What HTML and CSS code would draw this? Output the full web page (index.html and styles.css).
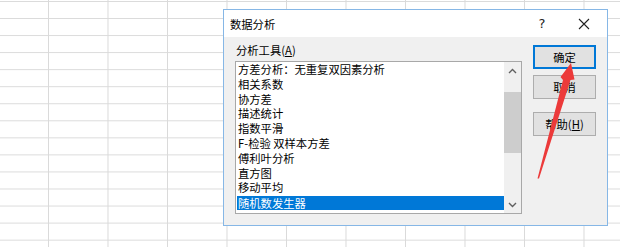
FILE: index.html
```html
<!DOCTYPE html>
<html lang="zh-CN">
<head>
<meta charset="utf-8">
<link rel="stylesheet" href="styles.css">
</head>
<body>
<div class="sheet"></div>
<div class="dialog">
  <div class="titlebar">
    <span class="title">数据分析</span>
    <span class="help-q">?</span>
    <span class="close">
      <svg width="12" height="12" viewBox="0 0 12 12"><path d="M1 1L11 11M11 1L1 11" stroke="#222" stroke-width="1.1" fill="none"/></svg>
    </span>
  </div>
  <div class="body">
    <div class="left">
      <div class="label">分析工具(<u>A</u>)</div>
      <div class="listbox">
        <ul class="items">
          <li>方差分析：无重复双因素分析</li>
          <li>相关系数</li>
          <li>协方差</li>
          <li>描述统计</li>
          <li>指数平滑</li>
          <li>F-检验 双样本方差</li>
          <li>傅利叶分析</li>
          <li>直方图</li>
          <li>移动平均</li>
          <li class="sel">随机数发生器</li>
        </ul>
        <div class="scrollbar">
          <div class="arrow up"><svg width="9" height="6" viewBox="0 0 9 6"><path d="M1 5L4.5 1.5L8 5" stroke="#606060" stroke-width="1.4" fill="none"/></svg></div>
          <div class="track"><div class="thumb"></div></div>
          <div class="arrow down"><svg width="9" height="6" viewBox="0 0 9 6"><path d="M1 1L4.5 4.5L8 1" stroke="#606060" stroke-width="1.4" fill="none"/></svg></div>
        </div>
      </div>
    </div>
    <div class="buttons">
      <div class="btn default">确定</div>
      <div class="btn">取消</div>
      <div class="btn help">帮助(<u>H</u>)</div>
    </div>
  </div>
</div>
<svg class="pointer" width="620" height="247" viewBox="0 0 620 247">
  <polygon points="571,63 574.5,79.5 570.5,80 539,178.5 537.5,178.5 563,80 560.5,77" fill="#ec3a3a"/>
</svg>
</body>
</html>
```
FILE: styles.css
```css
html, body {
  margin: 0;
  padding: 0;
}
body {
  width: 620px;
  height: 247px;
  overflow: hidden;
  position: relative;
  background: #fff;
  font-family: "Noto Sans CJK SC", "Noto Sans", sans-serif;
  color: #000;
}
.sheet {
  width: 620px;
  height: 247px;
  background-color: #fff;
  background-image:
    linear-gradient(to right, #dadada 0, #dadada 1px, transparent 1px),
    linear-gradient(to bottom, #dadada 0, #dadada 1px, transparent 1px);
  background-size: 59.5px 100%, 100% 17.05px;
  background-position: 48px 0, 0 1px;
}
.dialog {
  position: absolute;
  left: 223px;
  top: 9px;
  width: 383px;
  height: 215px;
  border: 1px solid #86b7e6;
  background: #f0f0f0;
  display: flex;
  flex-direction: column;
}
.titlebar {
  height: 27px;
  background: #fff;
  display: flex;
  align-items: center;
  font-size: 11.3px;
}
.title {
  margin-left: 6px;
  flex: 1;
  color: #000;
}
.help-q {
  font-family: "Segoe UI", "DejaVu Sans", sans-serif;
  font-size: 13px;
  color: #222;
  width: 14px;
  text-align: center;
  margin-right: 29px;
}
.close {
  width: 12px;
  height: 12px;
  margin-right: 17px;
  display: flex;
}
.body {
  flex: 1;
  display: flex;
  padding: 5px 0 0 11px;
}
.left {
  display: flex;
  flex-direction: column;
}
.label {
  font-size: 11.3px;
  line-height: 16px;
  height: 16px;
  margin-bottom: 3px;
  padding-left: 1px;
}
.listbox {
  width: 285px;
  height: 151px;
  border: 1px solid #a8a8a8;
  background: #fff;
  display: flex;
}
.items {
  list-style: none;
  margin: 0;
  padding: 0;
  flex: 1;
  font-size: 11.3px;
}
.items li {
  height: 14.8px;
  line-height: 14.8px;
  padding-left: 2px;
  white-space: nowrap;
}
.items li.sel {
  background: #0078d7;
  color: #fff;
  margin-left: 1px;
  padding-left: 1px;
  height: 14px;
  margin-top: 0.5px;
  line-height: 14px;
}
.scrollbar {
  width: 17px;
  background: #f0f0f0;
  display: flex;
  flex-direction: column;
}
.arrow {
  height: 17px;
  display: flex;
  align-items: center;
  justify-content: center;
}
.track {
  flex: 1;
  padding-top: 13px;
}
.thumb {
  height: 61px;
  background: #cdcdcd;
}
.buttons {
  margin-left: 11px;
  margin-top: 3px;
  display: flex;
  flex-direction: column;
}
.btn {
  width: 61px;
  height: 22px;
  border: 1px solid #adadad;
  background: #e1e1e1;
  font-size: 11.3px;
  display: flex;
  align-items: center;
  justify-content: center;
  margin-bottom: 6px;
}
.btn.default {
  width: 59px;
  height: 20px;
  border: 2px solid #0078d7;
}
.btn.help {
  margin-top: 7px;
}
.pointer {
  position: absolute;
  left: 0;
  top: 0;
}
```
